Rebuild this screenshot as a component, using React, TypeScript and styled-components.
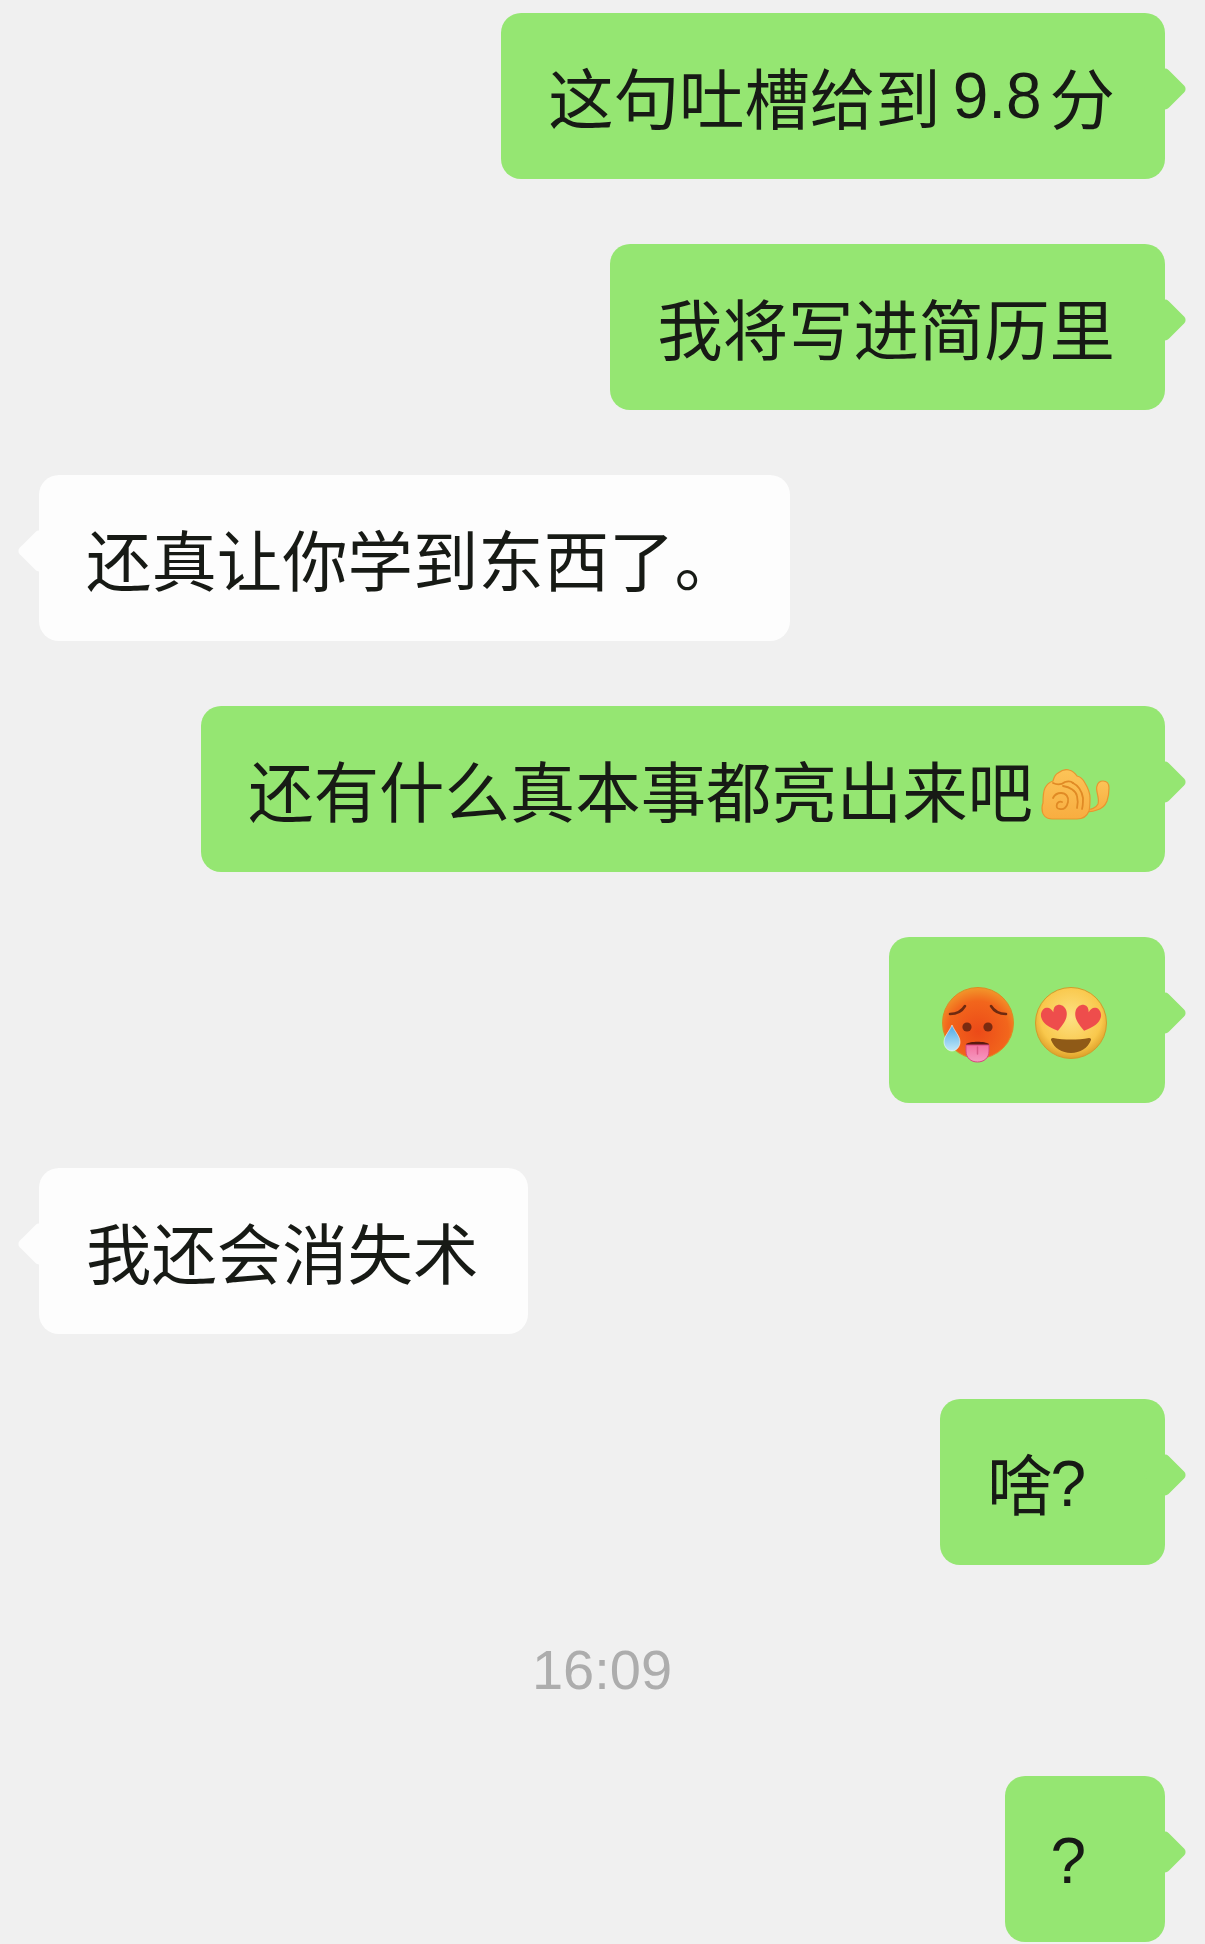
import React from "react";
import styled, { createGlobalStyle } from "styled-components";

const Global = createGlobalStyle`
  html, body { margin: 0; padding: 0; background: #f0f0f0; }
  body { width: 1205px; height: 1944px; overflow: hidden; }
`;

const Page = styled.main`
  width: 1205px;
  height: 1944px;
  box-sizing: border-box;
  padding: 13px 40px 0 39px;
  background: #f0f0f0;
  display: flex;
  flex-direction: column;
  gap: 65px;
  font-family: "Noto Sans CJK SC", "Liberation Sans", sans-serif;
  overflow: hidden;
`;

const Row = styled.div<{ $mine?: boolean }>`
  display: flex;
  justify-content: ${(p) => (p.$mine ? "flex-end" : "flex-start")};
`;

const Bubble = styled.div<{ $mine?: boolean }>`
  position: relative;
  height: 166px;
  box-sizing: border-box;
  padding: 0 50px 0 47px;
  display: flex;
  align-items: center;
  border-radius: 20px;
  background: ${(p) => (p.$mine ? "#95e672" : "#fdfdfd")};
  color: #171a15;
  font-size: 65.4px;
  line-height: 1;
  white-space: nowrap;

  &::after {
    content: "";
    position: absolute;
    top: 60px;
    ${(p) => (p.$mine ? "right: -16px;" : "left: -16px;")}
    width: 32px;
    height: 32px;
    border-radius: 5px;
    background: inherit;
    transform: rotate(45deg);
  }
`;

const Latin = styled.span`
  font-family: "Liberation Sans", sans-serif;
  font-size: 64px;
  margin: 0 8px 0 12px;
`;

const Mark = styled.span`
  font-family: "Liberation Sans", sans-serif;
  font-size: 64px;
  margin: 4px 29px 0 -2px;
`;

const EmojiRow = styled.div`
  display: flex;
  gap: 21px;
  align-items: center;
  margin: 10px 8px 0 6px;
`;

const HandIcon = styled.svg`
  width: 70px;
  height: 54px;
  margin: 14px 5px 0 7px;
  flex: none;
`;

const FaceIcon = styled.svg`
  width: 72px;
  height: 76px;
  flex: none;
`;

const TimeRow = styled.div`
  display: flex;
  justify-content: center;
  margin: -2px 0 1px 0;
  height: 82px;
  align-items: center;
  color: #adadad;
  font-family: "Liberation Sans", sans-serif;
  font-size: 56px;
`;

const Hand = () => (
  <HandIcon viewBox="0 0 70 54">
    <defs>
      <linearGradient id="hg" x1="0" y1="0" x2="0" y2="1">
        <stop offset="0" stopColor="#fcc458" />
        <stop offset="1" stopColor="#f8ad40" />
      </linearGradient>
    </defs>
    <path
      d="M46 40c5 1 10-1 12-5 2-6-3-14-1-18 1-4 4-5 6-5 4 0 6 3 6 7 0 6-1 10-2 13-2 5-6 8-10 9-5 2-9 2-12 1z"
      fill="url(#hg)"
      stroke="#e8952f"
      strokeWidth="1.200"
    />
    <path
      d="M2 39c0-2 0-3 1-5 0-5 0-11 2-15 2-4 5-6 8-7 1-4 3-7 5-8 4-3 8-4 11-3 4 1 6 3 8 6 4 1 6 3 8 7 3 5 5 10 5 15 0 5 0 9-1 13-2 5-6 8-12 8H12C6 50 2 46 2 39z"
      fill="url(#hg)"
      stroke="#e8952f"
      strokeWidth="1.200"
    />
    <g fill="none" stroke="#e08a25" strokeWidth="1.800" strokeLinecap="round">
      <path d="M13 14c4 2 8 2 12-1 3-1 6-1 8 1" />
      <path d="M23 17c7 1 13 5 14 10 1 4 1 8 0 12" />
      <path d="M33 14c6 3 9 9 10 15 0 4 0 8-1 11" />
      <path d="M13 29c2-4 5-5 8-5 5 0 8 4 7 9-1 5-4 8-8 7-3 0-4-2-3-5 1-2 3-3 5-2" />
    </g>
  </HandIcon>
);

const HotFace = () => (
  <FaceIcon viewBox="0 0 72 76">
    <defs>
      <radialGradient id="hot" cx="0.5" cy="0.62" r="0.66">
        <stop offset="0" stopColor="#ec4a18" />
        <stop offset="0.65" stopColor="#f2661c" />
        <stop offset="1" stopColor="#f2a22e" />
      </radialGradient>
      <linearGradient id="tongue" x1="0" y1="0" x2="0" y2="1">
        <stop offset="0" stopColor="#f470a0" />
        <stop offset="1" stopColor="#f59cc2" />
      </linearGradient>
      <linearGradient id="drop" x1="0" y1="0" x2="0" y2="1">
        <stop offset="0" stopColor="#4da8e6" />
        <stop offset="1" stopColor="#c2e8f8" />
      </linearGradient>
    </defs>
    <circle cx="36" cy="36" r="35.500" fill="url(#hot)" stroke="#dd8a22" strokeWidth="1" />
    <g fill="none" stroke="#6e2a10" strokeWidth="2.600" strokeLinecap="round">
      <path d="M8 27c6 0 12-3 15-8" />
      <path d="M64 27c-6 0-12-3-15-8" />
    </g>
    <circle cx="25" cy="40" r="4.600" fill="#7a2a10" />
    <circle cx="46" cy="40" r="4.600" fill="#7a2a10" />
    <path d="M24 57c4-3 19-3 23 0v2H24z" fill="#5c1a10" />
    <path d="M24 58h23v6c0 7-5 11-11.500 11S24 71 24 64z" fill="url(#tongue)" stroke="#d9467e" strokeWidth="1" />
    <path d="M35.500 60v7" stroke="#d95a87" strokeWidth="1.500" strokeLinecap="round" />
    <path d="M10 38c3 7 8 11 8 17 0 5-4 9-8 9s-8-4-8-9c0-6 5-10 8-17z" fill="url(#drop)" stroke="#ffffff" strokeOpacity="0.55" />
  </FaceIcon>
);

const heart =
  "M0 12C-9 6-13 1-13-5C-13-10-9-13-6-13C-3-13-1-11 0-7C1-11 3-13 6-13C9-13 13-10 13-5C13 1 9 6 0 12z";

const LoveFace = () => (
  <FaceIcon viewBox="0 0 72 76">
    <defs>
      <radialGradient id="love" cx="0.5" cy="0.42" r="0.6">
        <stop offset="0" stopColor="#fde184" />
        <stop offset="0.72" stopColor="#f9c84c" />
        <stop offset="1" stopColor="#d99a24" />
      </radialGradient>
    </defs>
    <circle cx="36" cy="36" r="35.500" fill="url(#love)" stroke="#d39a2a" strokeWidth="1" />
    <path d={heart} transform="translate(20 32) rotate(-14)" fill="#ee4d4c" />
    <path d={heart} transform="translate(52 32) rotate(14)" fill="#ee4d4c" />
    <path d="M18 51c11 2 25 2 36 0 2 0 2 1 2 2-3 8-11 13-20 13s-17-5-20-13c0-1 0-2 2-2z" fill="#8f5a17" />
  </FaceIcon>
);

export default function App() {
  return (
    <Page>
      <Global />
      <Row $mine>
        <Bubble $mine>
          这句吐槽给到<Latin>9.8</Latin>分
        </Bubble>
      </Row>
      <Row $mine>
        <Bubble $mine>我将写进简历里</Bubble>
      </Row>
      <Row>
        <Bubble>还真让你学到东西了。</Bubble>
      </Row>
      <Row $mine>
        <Bubble $mine>
          还有什么真本事都亮出来吧
          <Hand />
        </Bubble>
      </Row>
      <Row $mine>
        <Bubble $mine>
          <EmojiRow>
            <HotFace />
            <LoveFace />
          </EmojiRow>
        </Bubble>
      </Row>
      <Row>
        <Bubble>我还会消失术</Bubble>
      </Row>
      <Row $mine>
        <Bubble $mine>
          啥<Mark>?</Mark>
        </Bubble>
      </Row>
      <TimeRow>16:09</TimeRow>
      <Row $mine>
        <Bubble $mine>
          <Mark>?</Mark>
        </Bubble>
      </Row>
    </Page>
  );
}
